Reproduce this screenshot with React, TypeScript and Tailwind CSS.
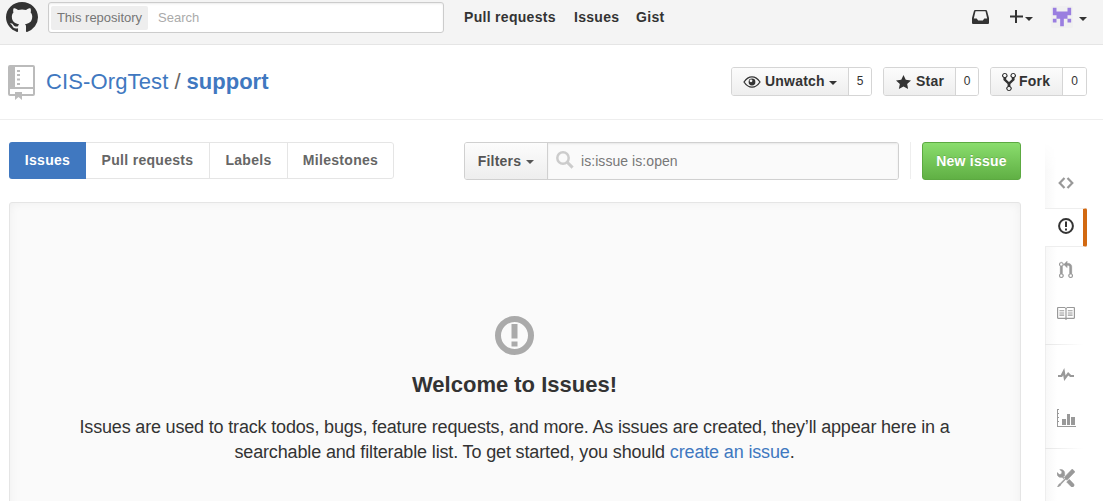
import React from "react";

type IconProps = { d: string; box: string; className?: string };

function Icon({ d, box, className = "" }: IconProps) {
  return (
    <svg viewBox={box} preserveAspectRatio="none" fill="currentColor" className={`block shrink-0 ${className}`} aria-hidden="true">
      <path fillRule="evenodd" d={d} />
    </svg>
  );
}

const paths = {
  github:
    "M8 0C3.58 0 0 3.58 0 8c0 3.54 2.29 6.53 5.47 7.59.4.07.55-.17.55-.38 0-.19-.01-.82-.01-1.49-2.01.37-2.53-.49-2.69-.94-.09-.23-.48-.94-.82-1.13-.28-.15-.68-.52-.01-.53.63-.01 1.08.58 1.23.82.72 1.21 1.87.87 2.33.66.07-.52.28-.87.51-1.07-1.78-.2-3.64-.89-3.64-3.95 0-.87.31-1.59.82-2.15-.08-.2-.36-1.02.08-2.12 0 0 .67-.21 2.2.82.64-.18 1.32-.27 2-.27.68 0 1.36.09 2 .27 1.53-1.04 2.2-.82 2.2-.82.44 1.1.16 1.92.08 2.12.51.56.82 1.27.82 2.15 0 3.07-1.87 3.75-3.65 3.95.29.25.54.73.54 1.48 0 1.07-.01 1.93-.01 2.2 0 .21.15.46.55.38A8.013 8.013 0 0016 8c0-4.42-3.58-8-8-8z",
  inbox: "M3 1H13Q14 1 14.200 2L16 9V14Q16 15 15 15H1Q0 15 0 14V9L1.800 2Q2 1 3 1ZM3.300 2.300L1.700 9.500H4.400L5.800 11.600H10.200L11.600 9.500H14.300L12.700 2.300Z",
  repo: "M3 2h1v1H3zM3 4h1v1H3zM3 6h1v1H3zM3 8h1v1H3zM1 0h10c.55 0 1 .45 1 1v12c0 .55-.45 1-1 1H6v2l-1.500-1.500L3 16v-2H1c-.55 0-1-.45-1-1V1c0-.55.45-1 1-1zM2.700 1v9H11V1zM1 11v2h2v-1h3v1h5v-2z",
  repoDots: "M3.700 2h1v1h-1zM3.700 4h1v1h-1zM3.700 6h1v1h-1zM3.700 8h1v1h-1z",
  star: "M14 6l-4.9-.64L7 1 4.9 5.36 0 6l3.6 3.26L2.67 14 7 11.67 11.33 14l-.93-4.74z",
  fork: "M8 1a1.993 1.993 0 0 0-1 3.72V6L5 8 3 6V4.72A1.993 1.993 0 0 0 2 1a1.993 1.993 0 0 0-1 3.72V6.5l3 3v1.78A1.993 1.993 0 0 0 5 15a1.993 1.993 0 0 0 1-3.72V9.5l3-3V4.72A1.993 1.993 0 0 0 8 1zM2 4.2C1.34 4.2.8 3.65.8 3c0-.65.55-1.2 1.2-1.2.65 0 1.2.55 1.2 1.2 0 .65-.55 1.2-1.2 1.2zm3 10c-.66 0-1.2-.55-1.2-1.2 0-.65.55-1.2 1.2-1.2.65 0 1.2.55 1.2 1.2 0 .65-.55 1.2-1.2 1.2zm3-10c-.66 0-1.2-.55-1.2-1.2 0-.65.55-1.2 1.2-1.2.65 0 1.2.55 1.2 1.2 0 .65-.55 1.2-1.2 1.2z",
  pull: "M11 11.28V5c-.03-.78-.34-1.47-.94-2.06C9.46 2.35 8.78 2.03 8 2H7V0L4 3l3 3V4h1c.27.02.48.11.69.31.21.2.3.42.31.69v6.28A1.993 1.993 0 0 0 10 15a1.993 1.993 0 0 0 1-3.72zm-1 2.92c-.66 0-1.2-.55-1.2-1.2 0-.65.55-1.2 1.2-1.2.65 0 1.2.55 1.2 1.2 0 .65-.55 1.2-1.2 1.2zM4 3c0-1.11-.89-2-2-2a1.993 1.993 0 0 0-1 3.72v6.56A1.993 1.993 0 0 0 2 15a1.993 1.993 0 0 0 1-3.72V4.72c.59-.34 1-.98 1-1.72zm-.8 10c0 .66-.55 1.2-1.2 1.2-.65 0-1.2-.55-1.2-1.2 0-.65.55-1.2 1.2-1.2.65 0 1.2.55 1.2 1.2zM2 4.2C1.34 4.2.8 3.65.8 3c0-.65.55-1.2 1.2-1.2.65 0 1.2.55 1.2 1.2 0 .65-.55 1.2-1.2 1.2z",
  book: "M3 5h4v1H3V5zm0 3h4V7H3v1zm0 2h4V9H3v1zm11-5h-4v1h4V5zm0 2h-4v1h4V7zm0 2h-4v1h4V9zm2-6v9c0 .55-.45 1-1 1H9.5l-1 1-1-1H2c-.55 0-1-.45-1-1V3c0-.55.45-1 1-1h5.5l1 1 1-1H15c.55 0 1 .45 1 1zm-8 .5L7.5 3H2v9h6V3.5zm7-.5H9.5l-.5.5V12h6V3z",
  pulse: "M11.5 8L8.8 5.4 6.6 8.5 5.5 1.6 2.38 8H0v2h3.6l.9-1.8.9 5.4L9 8.5l1.6 1.5H14V8z",
  tools: "M4.48 7.27c.26.26 1.28 1.33 1.28 1.33l.56-.58-.88-.91 1.69-1.8s-.76-.74-.43-.45c.32-1.19.03-2.51-.87-3.44C4.93.5 3.66.2 2.52.51l1.93 2-.51 1.96-1.89.52-1.93-1.99C-.19 4.17.1 5.48 1 6.4c.94.98 2.29 1.26 3.48.87zm6.44 1.94l-2.33 2.3 3.84 3.98c.31.33.73.49 1.14.49.41 0 .82-.16 1.14-.49.63-.65.63-1.7 0-2.35l-3.79-3.93zM16 2.53L13.55 0 6.33 7.46l.88.91-4.31 4.46-.99.53-1.39 2.27.35.37 2.2-1.44.51-1.02L7.9 9.08l.88.91L16 2.53z",
};

function Caret({ className = "" }: { className?: string }) {
  return (
    <svg viewBox="0 0 8 4" fill="currentColor" className={`block h-1 w-2 shrink-0 ${className}`} aria-hidden="true">
      <path d="M0 0h8L4 4z" />
    </svg>
  );
}

function Eye() {
  return (
    <svg viewBox="0 0 18 12" className="block h-3 w-[18px] shrink-0" fill="none" stroke="currentColor" aria-hidden="true">
      <path d="M1 6Q4.500 .8 9 .8T17 6Q13.500 11.200 9 11.200T1 6Z" strokeWidth="1.300" />
      <circle cx="9" cy="6" r="3.400" fill="currentColor" stroke="none" />
      <circle cx="8" cy="4.800" r="1.400" fill="#f6f6f6" stroke="none" />
    </svg>
  );
}

function IssueIcon({ className }: { className: string }) {
  return (
    <svg viewBox="0 0 39 39" fill="none" className={`block shrink-0 ${className}`} aria-hidden="true">
      <circle cx="19.500" cy="19.500" r="16.500" stroke="currentColor" strokeWidth="6" />
      <path d="M16.500 8h6v14.500h-6zM16.500 25.500h6v5h-6z" fill="currentColor" />
    </svg>
  );
}

function Avatar() {
  return (
    <svg viewBox="0 0 24 24" className="block h-[22px] w-[22px] shrink-0" aria-hidden="true">
      <rect width="24" height="24" rx="2" fill="#f0f0f0" />
      <path
        fill="#9a7ee0"
        d="M2 2h4v4h12V2h4v8h-4v4h4v4h-4v-4h-4v8h-4v-8H6v4H2v-4h4v-4H2z"
      />
    </svg>
  );
}

function SocialButton({ icon, label, count, caret, main, side, gap }: {
  icon: React.ReactNode; label: string; count: number; caret?: boolean; main: string; side: string; gap: string;
}) {
  return (
    <div className="flex h-[29px] overflow-hidden rounded-[3px] border border-[#d5d5d5]">
      <button className={`flex h-full items-center bg-linear-to-b from-[#fcfcfc] to-[#eee] text-[14px] font-bold tracking-[0.2px] ${main} ${gap}`}>
        {icon}
        <span>{label}</span>
        {caret && <Caret className="mt-[2px]" />}
      </button>
      <span className={`flex h-full items-center justify-center border-l border-[#d5d5d5] bg-white pb-[2px] text-[12px] ${side}`}>{count}</span>
    </div>
  );
}

export default function App() {
  return (
    <div className="h-[501px] w-[1103px] overflow-hidden bg-white font-['Liberation_Sans',Arial,sans-serif] text-[#333]">
      <header className="flex h-[45px] items-start border-b border-[#e5e5e5] bg-[#f4f4f4] pl-[6px]">
        <Icon d={paths.github} box="0 0 16 15.650" className="mt-[2px] h-[30px] w-[32px]" />
        <div className="mt-[2px] ml-[10px] flex h-[31px] w-[396px] items-center rounded-[3px] border border-[#ccc] bg-white pl-[2px] text-[13px] shadow-[inset_0_1px_2px_rgba(0,0,0,0.075)]">
          <span className="flex h-6 w-[97px] items-center justify-center rounded-[2px] bg-[#eee] tracking-[0px] whitespace-nowrap text-[#767676]">This repository</span>
          <span className="ml-[10px] text-[#aaa]">Search</span>
        </div>
        <nav className="flex h-[34px] items-center text-[14px] font-bold tracking-[0.3px]">
          <a className="ml-5 w-[110px]">Pull requests</a>
          <a className="w-[62px]">Issues</a>
          <a>Gist</a>
        </nav>
        <div className="ml-auto flex h-[34px] items-center pr-[16px]">
          <Icon d={paths.inbox} box="0 1 16 14" className="mr-[21px] h-[14px] w-[17px]" />
          <svg viewBox="0 0 13 13" className="mb-[2px] block h-[13px] w-[13px]" fill="currentColor" aria-hidden="true">
            <path d="M5 0h2v5.500h6v2H7V13H5V7.500H0v-2h5z" />
          </svg>
          <Caret className="mt-1 mr-[18px] ml-[2px]" />
          <Avatar />
          <Caret className="mt-1 ml-[6px]" />
        </div>
      </header>

      <section className="flex h-[75px] items-start border-b border-[#eee] pr-[16px] pl-2">
        <svg viewBox="0 0 27 35" className="mt-5 block h-[35px] w-[27px] shrink-0 text-[#bbb]" fill="currentColor" aria-hidden="true">
          <path fillRule="evenodd" d="M2 0h23q2 0 2 2v27q0 2-2 2H14v4l-3.500-3L7 35v-4H2q-2 0-2-2V2Q0 0 2 0zM7 2v20h18V2zM2 24v5h5v-2h7v2h11v-5z" />
          <path d="M9 5h3v2H9zM9 9h3v2H9zM9 13.500h3v2H9zM9 18h3v2H9z" />
        </svg>
        <h1 className="mt-[22px] ml-[11px] flex text-[22px] leading-[30px] whitespace-nowrap text-[#4078c0]">
          <a className="tracking-[0.130px]">CIS-OrgTest</a>
          <span className="mx-[6px] text-[#666]">/</span>
          <a className="font-bold">support</a>
        </h1>
        <div className="mt-[22px] ml-auto flex gap-[11px]">
          <SocialButton icon={<Eye />} label="Unwatch" count={5} caret main="w-[116px] pl-[11px]" side="w-[23px]" gap="gap-[4px]" />
          <SocialButton icon={<Icon d={paths.star} box="0 1 14 13" className="h-[14px] w-[15px]" />} label="Star" count={0} main="w-[71px] pl-[12px]" side="w-[23px]" gap="gap-[5px]" />
          <SocialButton icon={<Icon d={paths.fork} box="0 1 10 14" className="h-[18px] w-[14px]" />} label="Fork" count={0} main="w-[71px] pl-[11px]" side="w-[24px]" gap="gap-[3px]" />
        </div>
      </section>

      <div className="flex pt-[22px] pl-[9px]">
        <main className="w-[1012px]">
          <div className="flex h-[60px] items-start text-[14px]">
            <nav className="flex h-[37px] overflow-hidden rounded-[3px] font-bold tracking-[0.3px] text-[#666]">
              <a className="flex w-[77px] items-center justify-center bg-[#4078c0] text-white">Issues</a>
              <a className="flex w-[124px] items-center justify-center border-y border-r border-[#e5e5e5]">Pull requests</a>
              <a className="flex w-[78px] items-center justify-center border-y border-r border-[#e5e5e5]">Labels</a>
              <a className="flex w-[106px] items-center justify-center rounded-r-[3px] border-y border-r border-[#e5e5e5]">Milestones</a>
            </nav>
            <div className="ml-auto flex h-[38px] w-[435px] overflow-hidden rounded-[3px] border border-[#d0d0d0]">
              <button className="flex w-[83px] items-center justify-center gap-[5px] border-r border-[#d0d0d0] bg-linear-to-b from-[#fcfcfc] to-[#eee] font-bold tracking-[0.2px] text-[#555]">
                Filters
                <Caret className="mt-px" />
              </button>
              <div className="flex flex-1 items-center bg-[#fafafa] pl-2 text-[#777] shadow-[inset_0_1px_2px_rgba(0,0,0,0.075)]">
                <svg viewBox="0 0 18 18" className="mb-[3px] block h-[18px] w-[18px] text-[#ccc]" fill="none" stroke="currentColor" aria-hidden="true">
                  <circle cx="7" cy="7" r="5.700" strokeWidth="2.500" />
                  <path d="M11.500 11.500L16.600 16.600" strokeWidth="3" />
                </svg>
                <span className="ml-[7px] tracking-[0.060px]">is:issue is:open</span>
              </div>
            </div>
            <div className="ml-[11px] h-[37px] w-px bg-[#eee]" />
            <button className="ml-[11px] h-[38px] w-[99px] rounded-[3px] border border-[#5ca941] bg-linear-to-b from-[#8add6d] to-[#60b044] font-bold tracking-[0.250px] text-white [text-shadow:0_-1px_0_rgba(0,0,0,0.15)]">New issue</button>
          </div>

          <section className="flex h-[310px] flex-col items-center rounded-[3px] border border-[#e5e5e5] bg-[#fafafa] pt-[113px] pr-px shadow-[inset_0_0_10px_rgba(0,0,0,0.05)]">
            <IssueIcon className="mr-px h-[39px] w-[39px] text-[#aaa]" />
            <h2 className="mt-[15px] text-[22px] leading-[30px] font-bold">Welcome to Issues!</h2>
            <p className="mt-[15px] text-center text-[18px] leading-[25px] tracking-[-0.172px] whitespace-nowrap">
              Issues are used to track todos, bugs, feature requests, and more. As issues are created, they’ll appear here in a
              <br />
              <span className="tracking-[-0.145px]">
                searchable and filterable list. To get started, you should <a className="text-[#4078c0]">create an issue</a>.
              </span>
            </p>
          </section>
        </main>

        <aside className="ml-6 flex w-[42px] flex-col text-[#999]">
          <div className="flex h-[66px] w-[38px] justify-center bg-linear-to-r from-[#f8f8f8] to-30% to-white pt-[35px] pl-[4px] [mask-image:linear-gradient(to_bottom,transparent,#000_30px)]">
            <svg viewBox="0 0 16 12" className="block h-[12px] w-4" fill="none" stroke="currentColor" strokeWidth="2.200" aria-hidden="true">
              <path d="M6.500 1L1.700 6l4.800 5M9.500 1l4.800 5-4.800 5" />
            </svg>
          </div>
          <div className="flex h-[39px] w-[42px] items-start rounded-r-[2px] border-y border-r-4 border-y-[#eee] border-r-[#d26911] bg-white pt-[9px] pl-[13px] text-[#333]">
            <svg viewBox="0 0 16 16" className="block h-4 w-4" fill="none" aria-hidden="true">
              <circle cx="8" cy="8" r="6.900" stroke="currentColor" strokeWidth="2" />
              <path d="M7 3.500h2V9H7zM7 10.500h2v2H7z" fill="currentColor" />
            </svg>
          </div>
          <div className="flex h-[97px] w-[38px] flex-col items-center border-l border-[#eee] bg-linear-to-r from-[#f8f8f8] to-30% to-white pt-[14px] pl-[2px]">
            <Icon d={paths.pull} box="0 0 12 15" className="h-[17px] w-[14px] stroke-current stroke-[0.3]" />
            <Icon d={paths.book} box="1 2 15 12" className="mt-[29px] h-[13px] w-[18px]" />
          </div>
          <div className="h-px w-[38px] bg-linear-to-r from-[#e5e5e5] to-white" />
          <div className="flex h-[103px] w-[38px] flex-col items-center border-l border-[#eee] bg-linear-to-r from-[#f8f8f8] to-30% to-white pt-[23px] pl-[3px]">
            <Icon d={paths.pulse} box="0 1.600 14 12" className="h-[13px] w-[16px]" />
            <svg viewBox="0 0 19 19" className="mt-[28px] block h-[19px] w-[19px]" fill="currentColor" aria-hidden="true">
              <path d="M0 0h2v1H1v3h1v1H1v3h1v1H1v3h1v1H1v4h18v1H0zM5 10h4v6H5zM10 5h3v11h-3zM14 8h4v8h-4z" />
            </svg>
          </div>
          <div className="h-px w-[38px] bg-linear-to-r from-[#e5e5e5] to-white" />
          <div className="flex h-[53px] w-[38px] flex-col items-center border-l border-[#eee] bg-linear-to-r from-[#f8f8f8] to-30% to-white pt-[20px] pl-[3px]">
            <Icon d={paths.tools} box="0 0 16 16" className="h-[18px] w-[18px] stroke-current stroke-[0.5]" />
          </div>
        </aside>
      </div>
    </div>
  );
}
